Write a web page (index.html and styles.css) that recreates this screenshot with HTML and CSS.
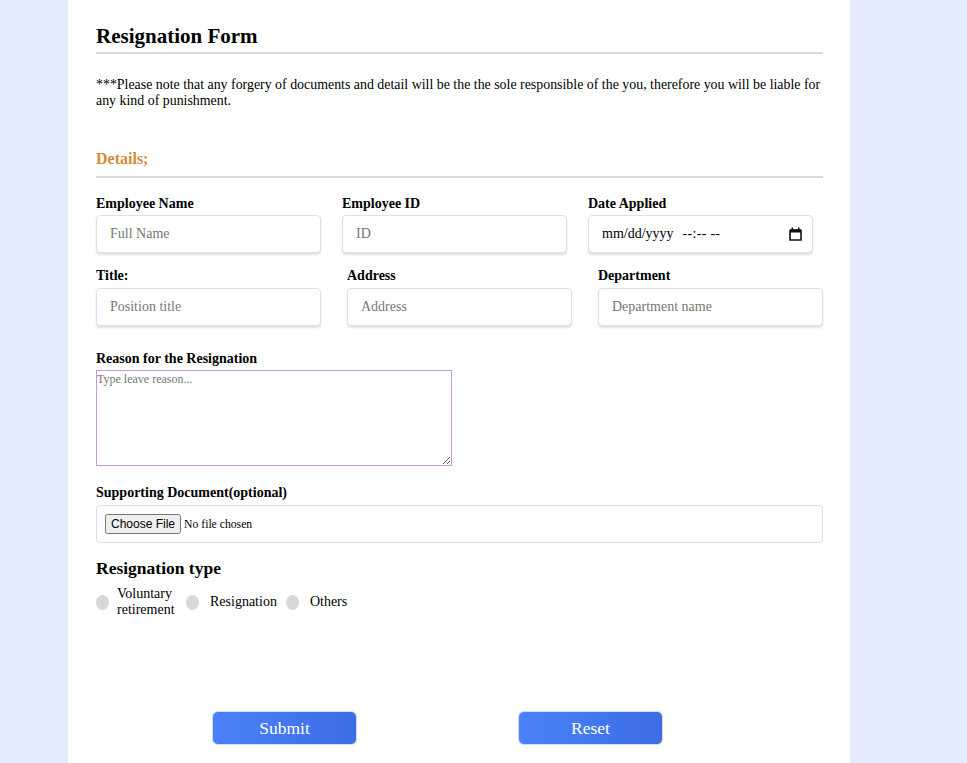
FILE: index.html
```html
<!DOCTYPE html>
<html>
<head>
<meta charset="utf-8">
<link rel="stylesheet" href="styles.css">
</head>
<body>
<div class="page">
  <form class="card">
    <h2 class="title">Resignation Form</h2>
    <p class="note">***Please note that any forgery of documents and detail will be the the sole responsible of the you, therefore you will be liable for any kind of punishment.</p>
    <h3 class="section">Details;</h3>
    <div class="row row-gap">
      <div class="field">
        <label class="lbl">Employee Name</label>
        <input class="inp" type="text" placeholder="Full Name">
      </div>
      <div class="field">
        <label class="lbl">Employee ID</label>
        <input class="inp" type="text" placeholder="ID">
      </div>
      <div class="field">
        <label class="lbl">Date Applied</label>
        <div class="inp inp-date">
          <span class="date-text">mm/dd/yyyy&nbsp; <span class="dash">--:-- --</span></span>
          <svg class="cal" width="13" height="14" viewBox="0 0 13 14" aria-hidden="true">
            <path d="M1 3.5h11v9.5H1z" fill="none" stroke="#111" stroke-width="1.6"/>
            <path d="M1 2.2h11v3.3H1z" fill="#111"/>
            <path d="M3.3 0.5v2.5M9.7 0.5v2.5" stroke="#111" stroke-width="1.5"/>
          </svg>
        </div>
      </div>
    </div>
    <div class="row row-between">
      <div class="field">
        <label class="lbl">Title:</label>
        <input class="inp" type="text" placeholder="Position title">
      </div>
      <div class="field">
        <label class="lbl">Address</label>
        <input class="inp" type="text" placeholder="Address">
      </div>
      <div class="field">
        <label class="lbl">Department</label>
        <input class="inp" type="text" placeholder="Department name">
      </div>
    </div>
    <div class="reason">
      <label class="lbl">Reason for the Resignation</label>
      <textarea class="ta" placeholder="Type leave reason..."></textarea>
    </div>
    <div class="doc">
      <label class="lbl">Supporting Document(optional)</label>
      <div class="filebox"><input class="file" type="file"></div>
    </div>
    <h3 class="rtype">Resignation type</h3>
    <div class="radios">
      <input class="radio" type="radio" name="t" id="r1"><label class="rlbl rlbl-narrow" for="r1">Voluntary retirement</label>
      <input class="radio" type="radio" name="t" id="r2"><label class="rlbl" for="r2">Resignation</label>
      <input class="radio" type="radio" name="t" id="r3"><label class="rlbl" for="r3">Others</label>
    </div>
    <div class="actions">
      <button class="btn" type="button">Submit</button>
      <button class="btn" type="button">Reset</button>
    </div>
  </form>
</div>
</body>
</html>
```
FILE: styles.css
```css
html, body {
  margin: 0;
  padding: 0;
}
body {
  background: #e2ecfd;
  font-family: "Liberation Serif", "Times New Roman", serif;
  color: #000;
  overflow: hidden;
}
.page {
  padding-left: 68px;
}
.card {
  width: 727px;
  background: #fff;
  padding: 24px 27px 40px 28px;
  min-height: 760px;
}
.title {
  margin: 0;
  font-size: 21px;
  font-weight: bold;
  line-height: 24px;
  padding-bottom: 4px;
  border-bottom: 2px solid #d9d9d9;
}
.note {
  margin: 23px 0 0;
  font-size: 13.9px;
  line-height: 16px;
}
.section {
  margin: 40px 0 0;
  font-size: 16px;
  line-height: 20px;
  color: #d28c36;
  padding-bottom: 7px;
  border-bottom: 2px solid #d9d9d9;
}
.row {
  display: flex;
}
.row-gap {
  gap: 21px;
  margin-top: 18px;
}
.row-between {
  justify-content: space-between;
  margin-top: 15px;
}
.field {
  display: flex;
  flex-direction: column;
}
.lbl {
  font-size: 14px;
  font-weight: bold;
  line-height: 16px;
  margin-bottom: 4px;
}
.row-gap .lbl {
  margin-bottom: 3px;
}
.inp {
  box-sizing: border-box;
  width: 225px;
  height: 38px;
  border: 1px solid #e0e0e0;
  border-radius: 4px;
  box-shadow: 0 2px 2px rgba(0, 0, 0, 0.12);
  padding: 0 13px;
  font-family: "Liberation Serif", "Times New Roman", serif;
  font-size: 14px;
  color: #000;
  background: #fff;
  outline: none;
}
.inp::placeholder {
  color: #767676;
}
.inp-date {
  display: flex;
  align-items: center;
  justify-content: space-between;
  padding: 0 10px 0 13px;
}
.date-text {
  font-size: 14px;
  white-space: pre;
}
.dash {
  margin-left: 2px;
  letter-spacing: 0.3px;
}
.cal {
  display: block;
  flex: none;
}
.reason {
  display: flex;
  flex-direction: column;
  margin-top: 25px;
}
.reason .lbl {
  margin-bottom: 3px;
}
.ta {
  box-sizing: border-box;
  width: 356px;
  height: 96px;
  border: 1px solid #c49be0;
  border-radius: 0;
  padding: 1px 0 0 0;
  font-family: "Liberation Serif", "Times New Roman", serif;
  font-size: 12px;
  outline: none;
  resize: both;
}
.ta::placeholder {
  color: #767676;
}
.doc {
  display: flex;
  flex-direction: column;
  margin-top: 19px;
}
.doc .lbl {
  margin-bottom: 4px;
}
.filebox {
  box-sizing: border-box;
  height: 38px;
  border: 1px solid #e0e0e0;
  border-radius: 4px;
  display: flex;
  align-items: center;
  padding-left: 8px;
}
.file {
  font-family: "Liberation Serif", "Times New Roman", serif;
  font-size: 11.7px;
}
.file::file-selector-button {
  font-family: "Liberation Sans", Arial, sans-serif;
  font-size: 12px;
  padding: 1px 4px;
  margin-right: 3px;
}
.rtype {
  margin: 15px 0 0;
  font-size: 17.5px;
  line-height: 20px;
  font-weight: bold;
}
.radios {
  display: flex;
  align-items: center;
  margin-top: 8px;
}
.radio {
  appearance: none;
  -webkit-appearance: none;
  margin: 0;
  width: 13px;
  height: 15px;
  border-radius: 50%;
  background: #d8d8d8;
  flex: none;
}
.rlbl {
  font-size: 14px;
  line-height: 16px;
  margin-left: 11px;
  margin-right: 9px;
}
.rlbl-narrow {
  width: 60px;
  margin-left: 8px;
}
.actions {
  display: flex;
  gap: 161px;
  padding-left: 116px;
  margin-top: 93px;
}
.btn {
  box-sizing: border-box;
  width: 145px;
  height: 34px;
  border: 1px solid #d4d9e6;
  border-radius: 6px;
  background: linear-gradient(90deg, #4a82fb, #3c6de2);
  color: #fff;
  font-family: "Liberation Serif", "Times New Roman", serif;
  font-size: 17.5px;
  cursor: pointer;
}
```
